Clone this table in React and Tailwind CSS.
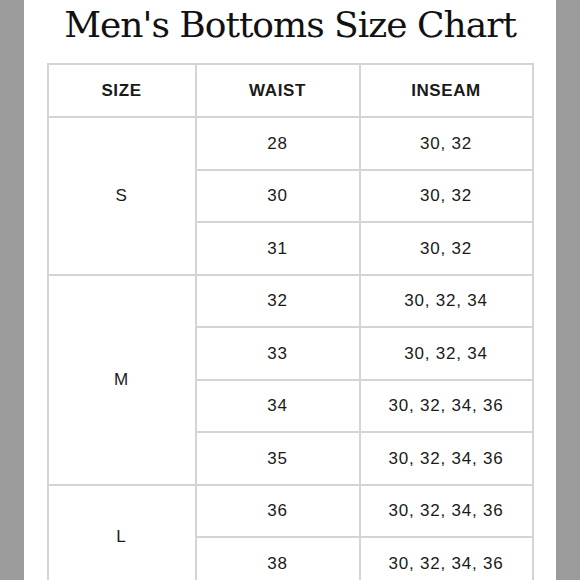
const rows = [
  { size: 'S', items: [['28', '30, 32'], ['30', '30, 32'], ['31', '30, 32']] },
  { size: 'M', items: [['32', '30, 32, 34'], ['33', '30, 32, 34'], ['34', '30, 32, 34, 36'], ['35', '30, 32, 34, 36']] },
  { size: 'L', items: [['36', '30, 32, 34, 36'], ['38', '30, 32, 34, 36']] },
]

export default function App() {
  return (
    <div className="h-[580px] w-[580px] overflow-hidden bg-[#9b9b9b] flex justify-center">
      <div className="w-[532px] h-full bg-white flex flex-col items-center">
        <h1 className="mt-[7px] text-[36px] leading-none tracking-[-1px] text-[#111] font-['DejaVu_Serif',serif] whitespace-nowrap">
          Men's Bottoms Size Chart
        </h1>

        <table className="mt-[20px] w-[485px] table-fixed border-collapse font-['Liberation_Sans',Arial,sans-serif] text-[17px] tracking-[0.8px] text-[#1a1a1a]">
          <colgroup>
            <col className="w-[148px]" />
            <col className="w-[164px]" />
            <col className="w-[173px]" />
          </colgroup>
          <thead>
            <tr className="h-[53px]">
              {['SIZE', 'WAIST', 'INSEAM'].map((h) => (
                <th key={h} className="border-2 border-[#d4d4d4] text-center font-bold tracking-[0.6px] p-0">
                  {h}
                </th>
              ))}
            </tr>
          </thead>
          <tbody>
            {rows.map((group) =>
              group.items.map(([waist, inseam], i) => (
                <tr key={group.size + waist} className="h-[52.5px]">
                  {i === 0 && (
                    <td rowSpan={group.items.length} className="border-2 border-[#d4d4d4] text-center p-0">
                      {group.size}
                    </td>
                  )}
                  <td className="border-2 border-[#d4d4d4] text-center p-0">{waist}</td>
                  <td className="border-2 border-[#d4d4d4] text-center p-0">{inseam}</td>
                </tr>
              ))
            )}
          </tbody>
        </table>
      </div>
    </div>
  )
}
